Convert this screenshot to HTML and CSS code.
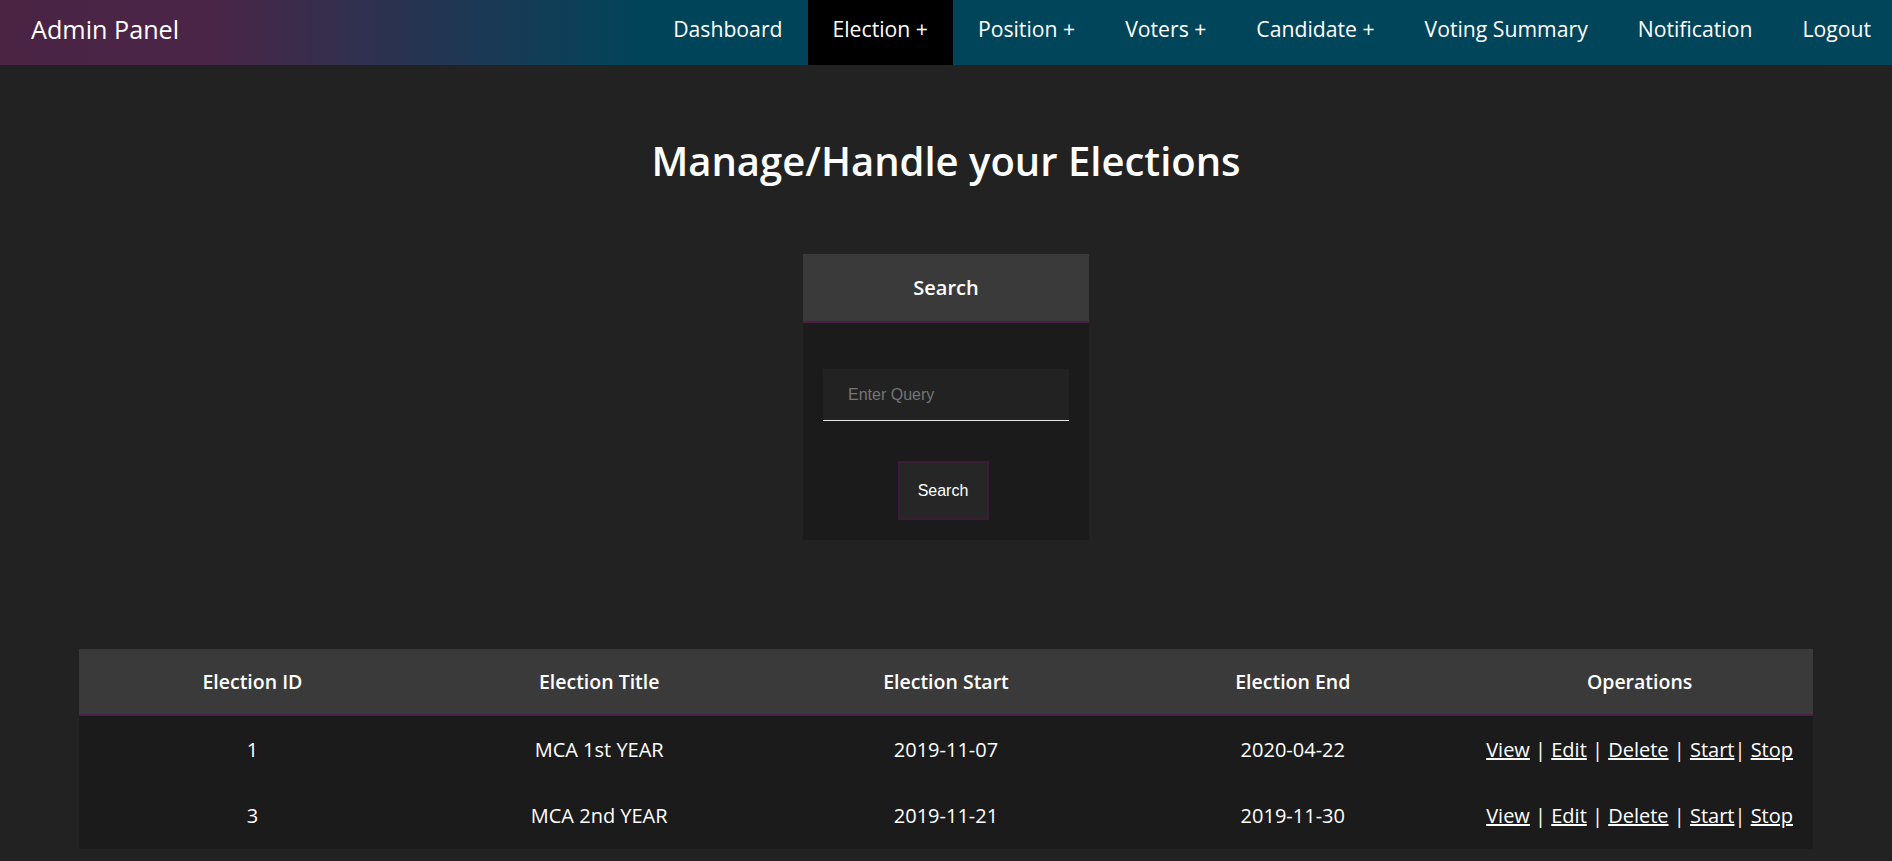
FILE: index.html
```html
<!DOCTYPE html>
<html lang="en">
<head>
<meta charset="utf-8">
<title>Admin Panel</title>
<link rel="stylesheet" href="styles.css">
</head>
<body>
<nav class="topnav">
  <a class="brand" href="#">Admin Panel</a>
  <ul class="menu">
    <li><a href="#">Dashboard</a></li>
    <li><a class="active" href="#">Election +</a></li>
    <li><a href="#">Position +</a></li>
    <li><a href="#">Voters +</a></li>
    <li><a href="#">Candidate +</a></li>
    <li><a href="#">Voting Summary</a></li>
    <li><a href="#">Notification</a></li>
    <li><a class="last" href="#">Logout</a></li>
  </ul>
</nav>
<main class="content">
  <h1 class="title">Manage/Handle your Elections</h1>
  <section class="card">
    <div class="card-head">Search</div>
    <form class="card-body">
      <input class="query" type="text" placeholder="Enter Query">
      <button class="btn" type="button">Search</button>
    </form>
  </section>
  <table class="grid">
    <thead>
      <tr>
        <th>Election ID</th>
        <th>Election Title</th>
        <th>Election Start</th>
        <th>Election End</th>
        <th>Operations</th>
      </tr>
    </thead>
    <tbody>
      <tr>
        <td>1</td>
        <td>MCA 1st YEAR</td>
        <td>2019-11-07</td>
        <td>2020-04-22</td>
        <td class="ops"><a href="#">View</a> | <a href="#">Edit</a> | <a href="#">Delete</a> | <a href="#">Start</a>| <a href="#">Stop</a></td>
      </tr>
      <tr>
        <td>3</td>
        <td>MCA 2nd YEAR</td>
        <td>2019-11-21</td>
        <td>2019-11-30</td>
        <td class="ops"><a href="#">View</a> | <a href="#">Edit</a> | <a href="#">Delete</a> | <a href="#">Start</a>| <a href="#">Stop</a></td>
      </tr>
    </tbody>
  </table>
</main>
</body>
</html>
```

FILE: styles.css
```css
* { box-sizing: border-box; }
html, body {
  margin: 0;
  padding: 0;
  background: #222222;
  color: #ffffff;
  font-family: "Open Sans", "Liberation Sans", sans-serif;
}
.topnav {
  display: flex;
  justify-content: space-between;
  align-items: stretch;
  height: 65px;
  background: linear-gradient(90deg, #4b2444 0%, #4a2547 11%, #30304f 19%, #163a55 27%, #00445a 34%, #00455a 100%);
}
.brand {
  display: flex;
  align-items: center;
  padding: 0 0 8px 31px;
  font-size: 25.2px;
  color: #ffffff;
  text-decoration: none;
}
.menu {
  display: flex;
  list-style: none;
  margin: 0;
  padding: 0;
}
.menu li { display: flex; }
.menu a {
  display: flex;
  align-items: center;
  padding: 0 25px 8px;
  font-size: 21.2px;
  color: #ffffff;
  text-decoration: none;
}
.menu a.last { padding-right: 21px; }
.menu a.active { background: #000000; }
.content {
  display: flex;
  flex-direction: column;
  align-items: center;
}
.title {
  margin: 69px 0 0;
  font-size: 40px;
  line-height: 54px;
  font-weight: 600;
}
.card {
  width: 286px;
  margin-top: 66px;
  background: #1b1b1b;
}
.card-head {
  height: 69px;
  display: flex;
  align-items: center;
  justify-content: center;
  background: #3a3a3a;
  border-bottom: 2px solid #4c1f49;
  font-size: 20px;
  font-weight: 600;
}
.card-body {
  display: flex;
  flex-direction: column;
  align-items: center;
  padding: 46px 21px 20px;
  margin: 0;
}
.query {
  width: 246px;
  height: 52px;
  border: none;
  border-bottom: 1px solid #e8e8e8;
  background: #222222;
  padding: 0 25px;
  color: #ffffff;
  font-family: "Liberation Sans", Arial, sans-serif;
  font-size: 16px;
  outline: none;
}
.query::placeholder { color: #757575; }
.btn {
  margin: 40px 6px 0 0;
  width: 91px;
  height: 59px;
  background: #262626;
  border: 2px solid #3a1c39;
  color: #ffffff;
  font-family: "Liberation Sans", Arial, sans-serif;
  font-size: 16px;
}
.grid {
  width: 1734px;
  margin-top: 109px;
  border-collapse: collapse;
  table-layout: fixed;
  background: #1b1b1b;
}
.grid th {
  height: 66px;
  background: #3a3a3a;
  border-bottom: 2px solid #4c1f49;
  font-size: 19.5px;
  font-weight: 600;
  text-align: center;
}
.grid td {
  height: 67px;
  font-size: 20px;
  text-align: center;
}
.grid td a { color: #ffffff; }
```
